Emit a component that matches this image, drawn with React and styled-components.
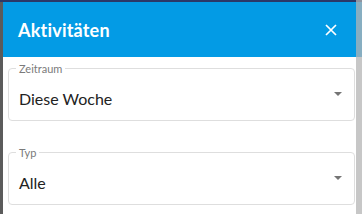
import React from "react"
import styled, { createGlobalStyle } from "styled-components"

const Global = createGlobalStyle`
  html, body { margin: 0; padding: 0; }
  body {
    width: 362px;
    height: 214px;
    overflow: hidden;
    background: #5b5b5b;
    font-family: Lato, "Open Sans", sans-serif;
  }
`

const Screen = styled.div`
  position: relative;
  width: 362px;
  height: 214px;
  display: flex;
  flex-direction: column;
  background: #5b5b5b;
`

const TopStrip = styled.div`
  height: 2px;
  background: #2b3868;
`

const Body = styled.div`
  flex: 1;
  display: flex;
  padding-left: 3px;
`

const Dialog = styled.div`
  flex: 1;
  background: #fff;
  display: flex;
  flex-direction: column;
`

const Header = styled.div`
  height: 55px;
  background: #039be5;
  display: flex;
  align-items: center;
  justify-content: space-between;
  padding: 0 25px 0 15px;
`

const Title = styled.h2`
  margin: 0;
  color: #fff;
  font-size: 18px;
  font-weight: 700;
  letter-spacing: 0.2px;
`

const CloseButton = styled.button`
  border: none;
  background: none;
  padding: 0;
  width: 12px;
  height: 12px;
  display: flex;
  cursor: pointer;
`

const Fields = styled.div`
  display: flex;
  flex-direction: column;
  gap: 31px;
  padding: 11px 7px 0 5px;
`

const Field = styled.div`
  height: 53px;
  box-sizing: border-box;
  border: 1px solid #dedede;
  border-radius: 4px;
  padding: 8px 11px 0 10px;
  display: flex;
  align-items: center;
  justify-content: space-between;
  position: relative;
`

const Label = styled.span`
  position: absolute;
  top: -7px;
  left: 7px;
  padding: 0 3px;
  background: #fff;
  font-size: 11px;
  line-height: 13px;
  color: #7a7a7a;
`

const Value = styled.span`
  font-size: 16px;
  color: #222;
`

const Arrow = styled.span`
  width: 0;
  height: 0;
  border-left: 4px solid transparent;
  border-right: 4px solid transparent;
  border-top: 4px solid #757575;
  margin: -9px 1px 0 0;
`

const Scrollbar = styled.div`
  position: absolute;
  top: 0;
  right: 0;
  width: 6px;
  height: 100%;
  background: rgba(180, 180, 180, 0.75);
`

const fields = [
  { label: "Zeitraum", value: "Diese Woche" },
  { label: "Typ", value: "Alle" },
]

const App = () => {
  return (
    <Screen>
      <Global />
      <TopStrip />
      <Body>
        <Dialog>
          <Header>
            <Title>Aktivitäten</Title>
            <CloseButton aria-label="close">
              <svg width="12" height="12" viewBox="0 0 12 12">
                <path d="M1 1 L11 11 M11 1 L1 11" stroke="#fff" strokeWidth="1.7" />
              </svg>
            </CloseButton>
          </Header>
          <Fields>
            {fields.map(f => (
              <Field key={f.label}>
                <Label>{f.label}</Label>
                <Value>{f.value}</Value>
                <Arrow />
              </Field>
            ))}
          </Fields>
        </Dialog>
      </Body>
      <Scrollbar />
    </Screen>
  )
}

export default App
